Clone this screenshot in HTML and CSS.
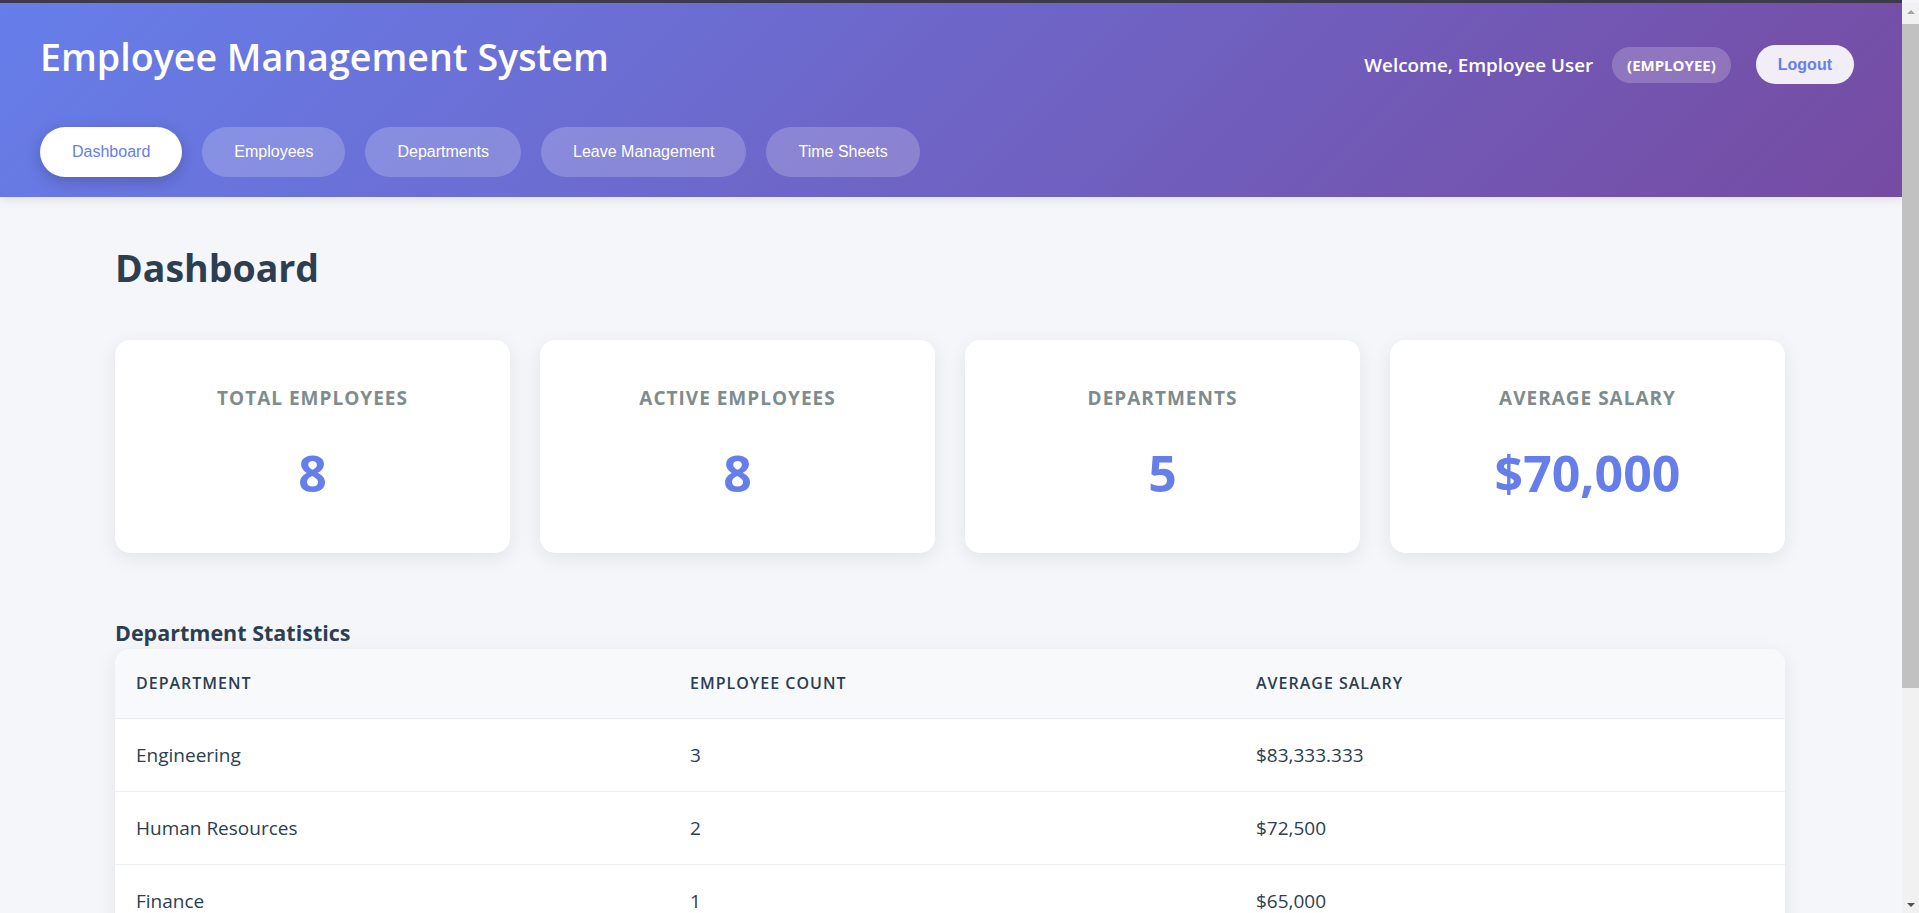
FILE: index.html
```html
<!DOCTYPE html>
<html lang="en">
<head>
<meta charset="utf-8">
<title>Employee Management System</title>
<link rel="stylesheet" href="styles.css">
</head>
<body>
<header class="app-header">
  <div class="header-top">
    <h1 class="app-title">Employee Management System</h1>
    <div class="user-info">
      <span class="welcome">Welcome, Employee User</span>
      <span class="role-badge">(EMPLOYEE)</span>
      <button class="logout-btn">Logout</button>
    </div>
  </div>
  <nav class="main-nav">
    <button class="nav-btn active">Dashboard</button>
    <button class="nav-btn">Employees</button>
    <button class="nav-btn">Departments</button>
    <button class="nav-btn">Leave Management</button>
    <button class="nav-btn">Time Sheets</button>
  </nav>
</header>

<main class="content">
  <h2 class="page-title">Dashboard</h2>

  <section class="stats-grid">
    <div class="stat-card">
      <div class="stat-label">Total Employees</div>
      <div class="stat-value">8</div>
    </div>
    <div class="stat-card">
      <div class="stat-label">Active Employees</div>
      <div class="stat-value">8</div>
    </div>
    <div class="stat-card">
      <div class="stat-label">Departments</div>
      <div class="stat-value">5</div>
    </div>
    <div class="stat-card">
      <div class="stat-label">Average Salary</div>
      <div class="stat-value">$70,000</div>
    </div>
  </section>

  <h3 class="section-title">Department Statistics</h3>
  <div class="table-card">
    <table class="data-table">
      <thead>
        <tr>
          <th class="col-dept">Department</th>
          <th class="col-count">Employee Count</th>
          <th>Average Salary</th>
        </tr>
      </thead>
      <tbody>
        <tr><td>Engineering</td><td>3</td><td>$83,333.333</td></tr>
        <tr><td>Human Resources</td><td>2</td><td>$72,500</td></tr>
        <tr><td>Finance</td><td>1</td><td>$65,000</td></tr>
        <tr><td>Marketing</td><td>1</td><td>$55,000</td></tr>
        <tr><td>Sales</td><td>1</td><td>$45,000</td></tr>
      </tbody>
    </table>
  </div>
</main>

<div class="scrollbar" aria-hidden="true">
  <span class="sb-arrow sb-up"></span>
  <span class="sb-thumb"></span>
  <span class="sb-arrow sb-down"></span>
</div>
</body>
</html>
```

FILE: styles.css
```css
* {
  box-sizing: border-box;
}

html, body {
  margin: 0;
  padding: 0;
}

html {
  background: #f5f6fa;
}

body {
  font-family: "Open Sans", "Noto Sans", sans-serif;
  background: #f5f6fa;
  color: #2c3e50;
  border-top: 3px solid #3d3b4b;
  margin-right: 17px;
}

/* ---------- Classic window scrollbar (overlay) ---------- */
.scrollbar {
  position: fixed;
  top: 3px;
  right: 0;
  bottom: 0;
  width: 17px;
  background: #f1f1f1;
  display: flex;
  flex-direction: column;
  align-items: stretch;
}

.sb-arrow {
  flex: 0 0 17px;
  display: flex;
  align-items: center;
  justify-content: center;
}

.sb-arrow::before {
  content: "";
  width: 0;
  height: 0;
  border-left: 4px solid transparent;
  border-right: 4px solid transparent;
}

.sb-up::before {
  border-bottom: 4px solid #a3a3a3;
}

.sb-down {
  margin-top: auto;
}

.sb-down::before {
  border-top: 4px solid #505050;
}

.sb-thumb {
  height: 664px;
  margin-top: 4px;
  background: #c1c1c1;
}

/* ---------- Header ---------- */
.app-header {
  background: linear-gradient(135deg, #667eea 0%, #764ba2 100%);
  color: #fff;
  padding: 20px 48px 20px 40px;
  box-shadow: 0 2px 10px rgba(0, 0, 0, 0.1);
}

.header-top {
  display: flex;
  justify-content: space-between;
  align-items: flex-start;
}

.app-title {
  margin: 11px 0 0;
  font-size: 37.6px;
  font-weight: 600;
  line-height: 1.2;
}

.user-info {
  display: flex;
  align-items: center;
  margin-top: 22px;
}

.welcome {
  font-size: 18.8px;
  font-weight: 600;
  margin-right: 19px;
}

.role-badge {
  background: rgba(255, 255, 255, 0.2);
  border-radius: 18px;
  padding: 7px 15px;
  font-size: 15px;
  font-weight: 700;
  line-height: 22px;
  margin-right: 25px;
}

.logout-btn {
  font-family: "Liberation Sans", Arial, sans-serif;
  font-size: 16px;
  font-weight: 700;
  color: #667eea;
  background: rgba(255, 255, 255, 0.9);
  border: none;
  border-radius: 20px;
  padding: 10px 22px;
  line-height: 19px;
  cursor: pointer;
}

.main-nav {
  display: flex;
  gap: 20px;
  margin-top: 43px;
}

.nav-btn {
  font-family: "Liberation Sans", Arial, sans-serif;
  font-size: 16px;
  color: #fff;
  background: rgba(255, 255, 255, 0.2);
  border: none;
  border-radius: 25px;
  padding: 16px 32px;
  line-height: 18px;
  cursor: pointer;
}

.nav-btn.active {
  background: #fff;
  color: #667eea;
  box-shadow: 0 4px 15px rgba(0, 0, 0, 0.2);
}

/* ---------- Content ---------- */
.content {
  padding: 48px 117px 130px 115px;
}

.page-title {
  margin: 0;
  font-size: 37.5px;
  font-weight: 700;
  line-height: 1.2;
  color: #2c3e50;
}

.stats-grid {
  display: grid;
  grid-template-columns: repeat(4, 1fr);
  gap: 30px;
  margin-top: 50px;
}

.stat-card {
  background: #fff;
  border-radius: 15px;
  box-shadow: 0 5px 20px rgba(0, 0, 0, 0.08);
  padding: 44px 20px 50px;
  text-align: center;
}

.stat-label {
  font-size: 19px;
  font-weight: 700;
  line-height: 1.5;
  letter-spacing: 1px;
  text-transform: uppercase;
  color: #7f8c8d;
}

.stat-value {
  margin-top: 30px;
  font-size: 50px;
  font-weight: 700;
  line-height: 1.2;
  color: #667eea;
}

.section-title {
  margin: 67px 0 4px;
  font-size: 21.5px;
  font-weight: 700;
  line-height: 1.2;
  color: #2c3e50;
}

.table-card {
  background: #fff;
  border-radius: 15px;
  box-shadow: 0 5px 20px rgba(0, 0, 0, 0.08);
  overflow: hidden;
}

.data-table {
  width: 100%;
  border-collapse: collapse;
  table-layout: fixed;
}

.data-table th {
  background: #f8f9fb;
  text-align: left;
  font-size: 16px;
  font-weight: 600;
  letter-spacing: 1px;
  text-transform: uppercase;
  color: #2c3e50;
  padding: 23px 21px 24px;
  line-height: 22px;
  border-bottom: 1px solid #e9ecef;
}

.col-dept {
  width: 554px;
}

.col-count {
  width: 566px;
}

.data-table td {
  font-size: 19px;
  line-height: 28px;
  padding: 22px 21px;
  color: #2c3e50;
  border-bottom: 1px solid #ecf0f1;
}
```
